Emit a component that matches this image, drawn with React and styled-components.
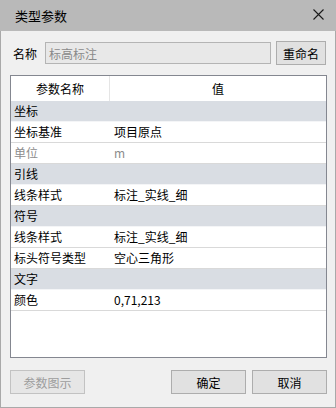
import styled, { createGlobalStyle } from "styled-components";

const GlobalStyle = createGlobalStyle`
  html, body {
    margin: 0;
    padding: 0;
    background: #f0f0f0;
  }
  * {
    box-sizing: border-box;
  }
`;

const rows = [
  { group: "坐标" },
  { name: "坐标基准", value: "项目原点" },
  { name: "单位", value: "m", disabled: true },
  { group: "引线" },
  { name: "线条样式", value: "标注_实线_细" },
  { group: "符号" },
  { name: "线条样式", value: "标注_实线_细" },
  { name: "标头符号类型", value: "空心三角形" },
  { group: "文字" },
  { name: "颜色", value: "0,71,213" },
];

export default function App() {
  return (
    <>
      <GlobalStyle />
      <Window>
        <TitleBar>
          <Title>类型参数</Title>
          <CloseBtn>
            <svg width="11" height="11" viewBox="0 0 11 11">
              <path d="M0.5 0.5 L10.5 10.5 M10.5 0.5 L0.5 10.5" stroke="#1a1a1a" strokeWidth="1.1" fill="none" />
            </svg>
          </CloseBtn>
        </TitleBar>
        <Body>
          <NameRow>
            <Label>名称</Label>
            <NameInput>标高标注</NameInput>
            <Button $w={50}>重命名</Button>
          </NameRow>
          <Table>
            <Header>
              <HeadCell $w={99}>参数名称</HeadCell>
              <HeadCell $grow>值</HeadCell>
            </Header>
            {rows.map((r, i) =>
              r.group ? (
                <GroupRow key={i}>{r.group}</GroupRow>
              ) : (
                <Row key={i} $disabled={r.disabled}>
                  <NameCell>{r.name}</NameCell>
                  <ValueCell>{r.value}</ValueCell>
                </Row>
              )
            )}
          </Table>
          <Footer>
            <Button $w={75} disabled>参数图示</Button>
            <Spacer />
            <Button $w={75}>确定</Button>
            <Button $w={75}>取消</Button>
          </Footer>
        </Body>
      </Window>
    </>
  );
}

const Window = styled.div`
  width: 336px;
  height: 408px;
  display: flex;
  flex-direction: column;
  background: #f0f0f0;
  border: 1px solid #a9a9a9;
  border-top: none;
  font-family: "Noto Sans CJK SC", "Noto Sans", sans-serif;
  font-size: 12px;
  color: #000;
`;

const TitleBar = styled.div`
  height: 31px;
  margin: 0 -1px;
  background: #b9b9b9;
  display: flex;
  align-items: center;
  justify-content: space-between;
  padding: 0 12px 1px 15px;
`;

const Title = styled.span`
  font-size: 13px;
  color: #000;
`;

const CloseBtn = styled.div`
  display: flex;
  align-items: center;
  padding-bottom: 1px;
`;

const Body = styled.div`
  flex: 1;
  display: flex;
  flex-direction: column;
  padding: 10px 8px 12px 9px;
`;

const NameRow = styled.div`
  display: flex;
  align-items: center;
  height: 24px;
`;

const Label = styled.span`
  width: 35px;
  padding-left: 3px;
  font-size: 12px;
`;

const NameInput = styled.div`
  width: 226px;
  height: 22px;
  margin-right: 5px;
  background: #e8e8e8;
  border: 1px solid #b4b4b4;
  color: #8a8a8a;
  padding: 0 3px;
  display: flex;
  align-items: center;
`;

const Button = styled.button`
  width: ${(p) => p.$w}px;
  height: 24px;
  background: #e1e1e1;
  border: 1px solid #adadad;
  font-family: inherit;
  font-size: 12px;
  color: #000;
  padding: 0;
  display: flex;
  align-items: center;
  justify-content: center;

  &:disabled {
    background: #e6e6e6;
    border-color: #c2c2c2;
    color: #9d9d9d;
  }
`;

const Table = styled.div`
  margin-top: 10px;
  height: 283px;
  background: #fff;
  border: 1px solid #848790;
  display: flex;
  flex-direction: column;
`;

const Header = styled.div`
  height: 25px;
  display: flex;
`;

const HeadCell = styled.div`
  width: ${(p) => (p.$w ? `${p.$w}px` : "auto")};
  flex: ${(p) => (p.$grow ? 1 : "none")};
  display: flex;
  align-items: center;
  justify-content: center;
  border-right: ${(p) => (p.$grow ? "none" : "1px solid #e5e5e5")};
  padding-bottom: 1px;
`;

const GroupRow = styled.div`
  height: 21px;
  background: #d9dde3;
  border-bottom: 1px solid #f4f5f7;
  padding: 0 3px 1px;
  display: flex;
  align-items: center;
`;

const Row = styled.div`
  height: 21px;
  display: flex;
  align-items: center;
  border-bottom: 1px solid #d9d9d9;
  padding-bottom: 1px;
  color: ${(p) => (p.$disabled ? "#8c8c8c" : "#000")};
`;

const NameCell = styled.div`
  width: 99px;
  padding-left: 3px;
`;

const ValueCell = styled.div`
  flex: 1;
  padding-left: 4px;
`;

const Footer = styled.div`
  margin-top: 12px;
  display: flex;
  gap: 6px;
`;

const Spacer = styled.div`
  flex: 1;
`;
